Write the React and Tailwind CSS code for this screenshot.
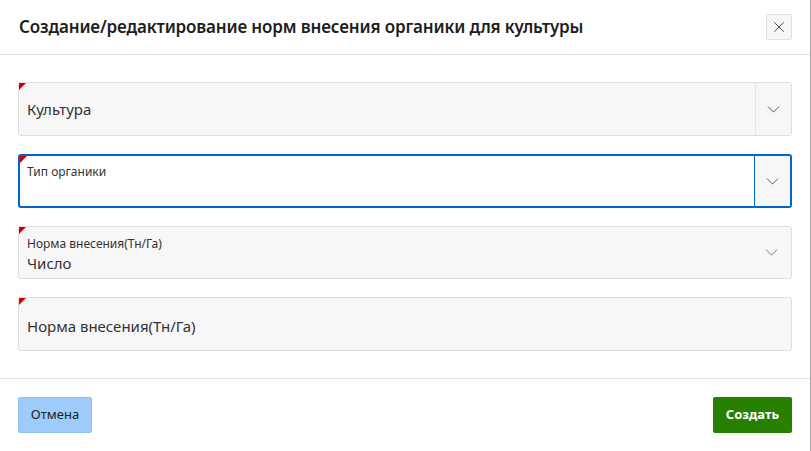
import { ChevronDown, X } from "lucide-react"

const Corner = () => (
  <span className="absolute left-0 top-0 h-0 w-0 border-t-[7px] border-r-[7px] border-t-[#d40000] border-r-transparent" />
)

const SelectField = ({ label, value, focused }) => (
  <div
    className={
      "relative flex h-[54px] rounded-[3px] " +
      (focused ? "border-2 border-[#0066cc] bg-white" : "border border-[#dedede] bg-[#f7f7f7]")
    }
  >
    <Corner />
    <div
      className={
        "flex flex-1 flex-col justify-center " +
        (focused ? "pl-[7px] " : "pl-[8px] ") +
        (label ? "pt-[3px]" : "")
      }
    >
      {label && <span className="text-[12px] leading-[16px] text-[#333]">{label}</span>}
      {value && <span className="text-[15px] leading-[22px] text-[#333]">{value}</span>}
      {!value && label && <span className="h-[22px]" />}
    </div>
    <div
      className={
        "flex w-[36px] items-center justify-center bg-[#f7f7f7] border-l " +
        (focused ? "border-[#0066cc] w-[35px]" : "border-[#e4e4e4]")
      }
    >
      <ChevronDown className="h-[21px] w-[21px] text-[#555]" strokeWidth={1.1} />
    </div>
  </div>
)

export default function App() {
  return (
    <div
      className="flex h-[451px] w-[811px] flex-col border-r border-[#a8a8a8] bg-white text-[#222]"
      style={{ fontFamily: "'Noto Sans', 'Open Sans', sans-serif" }}
    >
      {/* Header */}
      <div className="flex h-[55px] items-center justify-between border-b border-[#e2e2e2] pl-[19px] pr-[18px]">
        <h1 className="text-[17px] font-semibold tracking-[-0.15px] text-[#1e1e1e]">
          Создание/редактирование норм внесения органики для культуры
        </h1>
        <button className="flex h-[26px] w-[26px] items-center justify-center rounded-[2px] border border-[#e2e2e2] bg-[#f7f7f7]">
          <X className="h-[18px] w-[18px] text-[#444]" strokeWidth={1.2} />
        </button>
      </div>

      {/* Body */}
      <div className="flex flex-1 flex-col gap-[18px] px-[18px] pt-[27px]">
        <SelectField value="Культура" />
        <SelectField label="Тип органики" focused />
        <div className="relative flex h-[53px] rounded-[3px] border border-[#dedede] bg-[#f7f7f7]">
          <Corner />
          <div className="flex flex-1 flex-col justify-center pl-[8px] pt-[4px]">
            <span className="text-[12px] leading-[16px] text-[#333]">Норма внесения(Тн/Га)</span>
            <span className="text-[15px] leading-[22px] text-[#333]">Число</span>
          </div>
          <div className="flex w-[36px] items-center justify-center pr-[4px]">
            <ChevronDown className="h-[21px] w-[21px] text-[#777]" strokeWidth={1.1} />
          </div>
        </div>
        <div className="relative flex h-[54px] items-center rounded-[3px] border border-[#dedede] bg-[#f7f7f7] pl-[8px] pt-[4px]">
          <Corner />
          <span className="text-[15px] text-[#333]">Норма внесения(Тн/Га)</span>
        </div>
      </div>

      {/* Footer */}
      <div className="flex h-[73px] items-center justify-between border-t border-[#e2e2e2] px-[18px]">
        <button className="h-[36px] w-[74px] rounded-[2px] border border-[#8fc0f0] bg-[#9ecbfa] text-[13px] font-normal text-[#222]">
          Отмена
        </button>
        <button className="h-[36px] w-[79px] rounded-[2px] bg-[#288000] text-[13px] font-bold text-white">
          Создать
        </button>
      </div>
    </div>
  )
}
